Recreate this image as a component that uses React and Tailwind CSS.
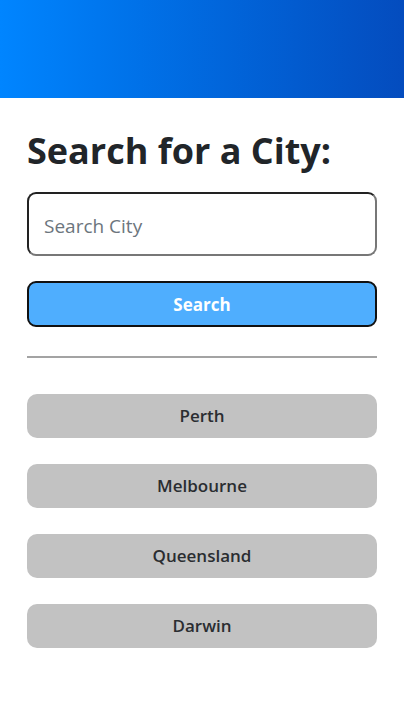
export default function App() {
  const cities = ["Perth", "Melbourne", "Queensland", "Darwin"];
  return (
    <div className="min-h-[726px] bg-white" style={{ fontFamily: '"Open Sans", "Noto Sans", sans-serif' }}>
      <div className="h-[98px] bg-gradient-to-r from-[#0085ff] to-[#044cbe]" />
      <div className="px-[27px] pt-[31px]">
        <h1 className="text-[36px] font-bold leading-[1.2] text-[#212529]">Search for a City:</h1>
        <input
          placeholder="Search City"
          className="mt-[20px] block h-[64px] w-full rounded-[9px] border-2 border-t-[#222] border-l-[#222] border-r-[#777] border-b-[#777] px-[15px] pt-[3px] text-[19px] text-[#212529] placeholder:text-[#6c757d] outline-none"
        />
        <button className="mt-[25px] block h-[46px] w-full rounded-[9px] border-2 border-[#111] bg-[#4faefe] pt-[1px] text-[17px] font-bold text-white">
          Search
        </button>
        <hr className="mt-[29px] border-0 border-t-2 border-[#a3a3a3]" />
        <div className="mt-[36px] flex flex-col gap-[26px]">
          {cities.map((c) => (
            <button key={c} className="h-[44px] w-full rounded-[10px] bg-[#c2c2c2] text-[17px] font-semibold text-[#2a2d31]">
              {c}
            </button>
          ))}
        </div>
      </div>
    </div>
  );
}
